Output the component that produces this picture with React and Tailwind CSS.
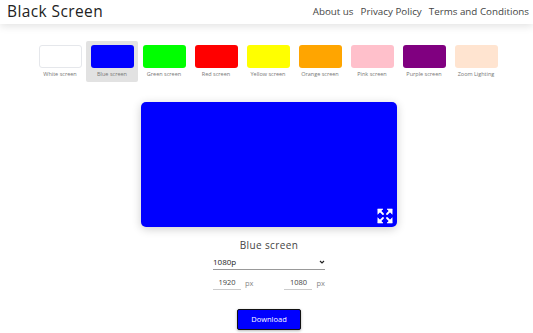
import React, { useState } from 'react';

const colors = [
  { name: 'White screen', bg: 'bg-white border border-gray-200' },
  { name: 'Blue screen', bg: 'bg-[#0000ff]' },
  { name: 'Green screen', bg: 'bg-[#00ff00]' },
  { name: 'Red screen', bg: 'bg-[#ff0000]' },
  { name: 'Yellow screen', bg: 'bg-[#ffff00]' },
  { name: 'Orange screen', bg: 'bg-[#ffa500]' },
  { name: 'Pink screen', bg: 'bg-[#ffc0cb]' },
  { name: 'Purple screen', bg: 'bg-[#800080]' },
  { name: 'Zoom Lighting', bg: 'bg-[#ffe4d0]' },
];

const ExpandIcon = () => (
  <svg width="16" height="16" viewBox="0 0 16 16" fill="white" stroke="white" strokeWidth="1.8" strokeLinecap="round">
    <path d="M3 3l3 3" />
    <path d="M13 3l-3 3" />
    <path d="M3 13l3-3" />
    <path d="M13 13l-3-3" />
    <path d="M1 1h5l-5 5z" strokeWidth="0.6" />
    <path d="M15 1h-5l5 5z" strokeWidth="0.6" />
    <path d="M1 15h5l-5-5z" strokeWidth="0.6" />
    <path d="M15 15h-5l5-5z" strokeWidth="0.6" />
  </svg>
);

export default function App() {
  const [selected, setSelected] = useState(1);

  return (
    <div className="min-h-[333px] bg-white text-[#333] font-['Open_Sans',sans-serif]">
      <header className="h-6 flex items-center justify-between pl-[7px] pr-[4px] shadow-[0_2px_8px_rgba(0,0,0,0.12)]">
        <span className="text-[15.5px] leading-none text-[#222] tracking-[0.4px]">Black Screen</span>
        <nav className="flex items-center gap-[7px] text-[9.8px] text-[#444]">
          <a href="#">About us</a>
          <a href="#">Privacy Policy</a>
          <a href="#">Terms and Conditions</a>
        </nav>
      </header>

      <div className="flex justify-center mt-[17px] pl-[3px]">
        {colors.map((c, i) => (
          <button
            key={c.name}
            onClick={() => setSelected(i)}
            className={`w-[52px] h-[41px] flex flex-col items-center pt-1 rounded-[2px] ${
              selected === i ? 'bg-[#e2e2e2]' : ''
            }`}
          >
            <div className={`w-[43px] h-[23px] rounded-[3px] ${c.bg}`} />
            <span className="mt-[4px] text-[5.5px] text-[#777] leading-none">{c.name}</span>
          </button>
        ))}
      </div>

      <div className="flex justify-center mt-[20px] pl-[5px]">
        <div className={`relative w-[256px] h-[125px] rounded-[5px] shadow-[0_2px_10px_rgba(0,0,0,0.2)] ${colors[selected].bg}`}>
          <div className="absolute right-[4px] bottom-[3px]">
            <ExpandIcon />
          </div>
        </div>
      </div>

      <div className="flex flex-col items-center pl-[5px]">
        <div className="mt-[11px] text-[10px] text-[#444] tracking-[0.4px]">{colors[selected].name}</div>
        <div className="mt-[3px] w-[112px] flex items-center justify-between border-b border-[#999] pb-[1px] text-[8px] text-[#222]">
          <span>1080p</span>
          <svg width="6" height="4" viewBox="0 0 6 4"><path d="M1 1l2 2 2-2" stroke="#222" strokeWidth="1.2" fill="none" /></svg>
        </div>
        <div className="mt-[7px] w-[112px] flex items-center justify-between text-[7.5px]">
          <div className="flex items-center gap-[4px]">
            <span className="w-[28px] text-center border-b border-[#ccc] pb-[1px] text-[#444]">1920</span>
            <span className="text-[#888]">px</span>
          </div>
          <div className="flex items-center gap-[4px]">
            <span className="w-[28px] text-center border-b border-[#ccc] pb-[1px] text-[#444]">1080</span>
            <span className="text-[#888]">px</span>
          </div>
        </div>
        <button className="mt-[19px] w-[64px] h-[21px] bg-[#0000ff] border border-[#111] rounded-[2px] text-white text-[7.5px] shadow-[0_1px_3px_rgba(0,0,0,0.3)]">
          Download
        </button>
      </div>
    </div>
  );
}
